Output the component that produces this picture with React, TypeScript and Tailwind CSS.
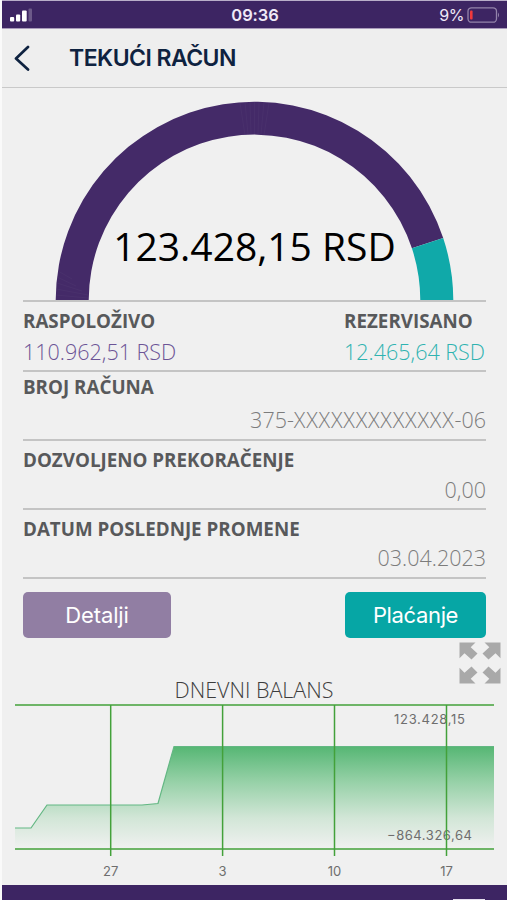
import { clsx } from "clsx"

const details = [
  { label: "BROJ RAČUNA", value: ["375-", "XXXXXXXXXXXXX", "-06"], height: "h-[69px]", pad: "pt-[2px]", gap: "pt-[2px]" },
  { label: "DOZVOLJENO PREKORAČENJE", value: ["0,00"], height: "h-[69px]", pad: "pt-[6px]", gap: "-mt-px" },
  { label: "DATUM POSLEDNJE PROMENE", value: ["03.04.2023"], height: "h-[69px]", pad: "pt-[6px]", gap: "-mt-[2px]" },
]

const ticks = [
  { x: 95.7, label: "27" },
  { x: 207.6, label: "3" },
  { x: 319.5, label: "10" },
  { x: 431.5, label: "17" },
]

const StatusBar = () => (
  <div className="grid h-[29px] shrink-0 grid-cols-3 items-center border-t border-[#b9aec9] border-b border-b-[#a99bbb] bg-[#3d2563] pt-px pr-[7px] pl-[8px] text-[#efe9f7]">
    <svg width="24" height="14" viewBox="0 0 24 14">
      <rect x="0" y="9" width="4.200" height="4.500" rx="1" fill="#fff" />
      <rect x="6" y="6.500" width="4.200" height="7" rx="1" fill="#fff" />
      <rect x="12" y="2.500" width="4.700" height="11" rx="1" fill="#fff" />
      <rect x="18.500" y="0.500" width="3.500" height="13" rx="1" fill="#6c5989" />
    </svg>
    <span className="text-center text-[16.5px] leading-none font-semibold tracking-[-0.1px]">09:36</span>
    <div className="flex items-center justify-end gap-[3px]">
      <span className="text-[16px] leading-none tracking-[-0.5px]">9%</span>
      <svg width="33" height="16" viewBox="0 0 33 16">
        <rect x="1" y="0.800" width="28.500" height="14.400" rx="3.500" fill="none" stroke="#9484ab" strokeWidth="1.300" />
        <rect x="3" y="3.500" width="2.600" height="9" rx="1" fill="#f0393c" />
        <path d="M31 5.500Q33 8 31 10.500Z" fill="#9484ab" />
      </svg>
    </div>
  </div>
)

const Header = () => (
  <header className="flex h-[59px] shrink-0 items-center border-b border-[#c9c9c9] bg-[#eeeeee] text-[#0e2240]">
    <svg className="ml-[12px]" width="17" height="26" viewBox="0 0 17 26">
      <path d="M14 2L2 13.500L14 24.500" fill="none" stroke="currentColor" strokeWidth="2.700" strokeLinecap="round" strokeLinejoin="round" />
    </svg>
    <h1 className="ml-[38px] text-[23px] leading-none font-semibold tracking-[-0.55px]">TEKUĆI RAČUN</h1>
  </header>
)

const Gauge = () => (
  <div className="relative h-[214px] shrink-0 border-b-2 border-[#c4c4c4]">
    <svg className="block" width="463" height="212" viewBox="23 88 463 212">
      <path d="M55.700 300A198.800 198.800 0 0 1 443.200 238L411.900 248.300A165.800 165.800 0 0 0 88.700 300Z" fill="#442a68" />
      <path d="M443.200 238A198.800 198.800 0 0 1 453.300 300H420.300A165.800 165.800 0 0 0 411.900 248.300Z" fill="#10a9a9" />
      <g stroke="#594278" strokeWidth="0.500" opacity="0.550">
        <path d="M254.500 102V134M250 102L251 134M245 102L248 134M259 102L258 134M264 102L261 134M240 103L245 135M269 103L264 135" />
        <path d="M56 295L88 298M56 289L88 295M57 283L82 291M57 277L76 286M58 271L72 279" />
      </g>
    </svg>
    <div className="absolute inset-x-0 top-[132px] text-center font-['Open_Sans'] text-[39px] leading-[52px] whitespace-nowrap text-black">
      123.428,15 RSD
    </div>
  </div>
)

const Expand = () => (
  <svg className="block" width="42" height="42" viewBox="0 0 42 42" fill="#a9a9a9">
    <path id="arrow" d="M0.500 0.500H16.500L11.700 5.300L18.500 11.500L12.500 17.500L5.500 11.200L0.500 16.200Z" />
    <use href="#arrow" transform="translate(42 0) scale(-1 1)" />
    <use href="#arrow" transform="translate(0 42) scale(1 -1)" />
    <use href="#arrow" transform="translate(42 42) scale(-1 -1)" />
  </svg>
)

const BalanceChart = () => (
  <svg className="ml-[15px] block shrink-0" width="480" height="181" viewBox="0 0 480 181">
    <defs>
      <linearGradient id="balance" gradientUnits="userSpaceOnUse" x1="0" y1="42" x2="0" y2="145">
        <stop offset="0" stopColor="#55b673" />
        <stop offset="0.350" stopColor="#97d1a8" />
        <stop offset="0.700" stopColor="#d2e6d7" />
        <stop offset="1" stopColor="#f0f1f0" />
      </linearGradient>
    </defs>
    <path d="M0 124H16L32 101H127L143 99.500L159 42.500H479V145H0Z" fill="url(#balance)" />
    <path d="M0 124H16L32 101H127L143 99.500L159 42.500H479" fill="none" stroke="#63b783" strokeWidth="1.200" />
    <g fontSize="13" fill="#6e6e6e" className="font-['Inter']">
      <text x="379" y="20" textLength="71">123.428,15</text>
      <text x="372" y="136" textLength="85">−864.326,64</text>
      {ticks.map((tick) => (
        <text key={tick.label} x={tick.x} y="172" textAnchor="middle">{tick.label}</text>
      ))}
    </g>
    <g stroke="#43a13a" strokeWidth="1.500">
      <path d="M0 1H479M0 145H479" />
      {ticks.map((tick) => (
        <path key={tick.label} d={`M${tick.x} 1V152`} />
      ))}
    </g>
  </svg>
)

const App = () => {
  return (
    <div className="flex h-[900px] w-[507px] flex-col overflow-hidden border-l-2 border-[#fafafa] bg-[#f0f0f0] font-['Inter',sans-serif]">
      <div className="-ml-[2px] flex min-h-0 flex-1 flex-col">
        <div className="pl-[2px]">
          <StatusBar />
          <Header />
        </div>

        <main className="pr-[21px] pl-[23px] font-['Open_Sans',sans-serif] text-[#58595b]">
          <Gauge />

          <div className="flex h-[70px] justify-between border-b-2 border-[#c4c4c4] pt-[6px]">
            <div>
              <div className="text-[18.8px] leading-[27px] font-bold">RASPOLOŽIVO</div>
              <div className="text-[21.5px] leading-[33px] font-light text-[#6c5496]">110.962,51 RSD</div>
            </div>
            <div className="-ml-px pr-px">
              <div className="text-[18.8px] leading-[27px] font-bold">REZERVISANO</div>
              <div className="text-[21.5px] leading-[33px] font-light text-[#2fb3b0]">12.465,64 RSD</div>
            </div>
          </div>

          {details.map((row) => (
            <div key={row.label} className={clsx("border-b-2 border-[#c4c4c4]", row.height, row.pad)}>
              <div className="text-[18.8px] leading-[26px] font-bold">{row.label}</div>
              <div className={clsx("text-right text-[21.5px] leading-[36px] font-light text-[#7c7c7c]", row.gap)}>
                {row.value.map((part) => (
                  <span key={part} className={clsx(part.startsWith("X") && "tracking-[0.8px]")}>{part}</span>
                ))}
              </div>
            </div>
          ))}

          <div className="mt-[13px] flex h-[46px] justify-between font-['Inter',sans-serif] text-[22px] text-white">
            <button className="w-[148px] rounded-[5px] bg-[#917ea3] tracking-[-0.1px]">Detalji</button>
            <button className="w-[141px] rounded-[5px] bg-[#06a6a5] tracking-[-0.35px]">Plaćanje</button>
          </div>
        </main>

        <div className="flex h-[66px] shrink-0 justify-end pt-[4px] pr-[6px]">
          <h2 className="flex-1 pt-[32px] pl-[49px] text-center font-['Open_Sans',sans-serif] text-[21.5px] leading-[32px] font-light text-[#3d3d3d]">
            DNEVNI BALANS
          </h2>
          <Expand />
        </div>

        <BalanceChart />

        <footer className="flex h-[15px] shrink-0 items-end justify-end bg-[#3d2563] pr-[22px]">
          <div className="h-px w-[32px] bg-[#e5dfee]" />
        </footer>
      </div>
    </div>
  )
}

export default App
